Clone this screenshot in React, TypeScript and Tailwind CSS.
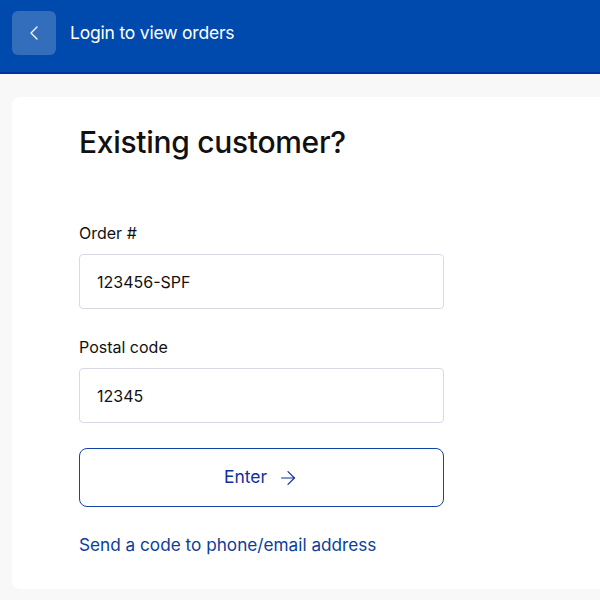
import React from 'react'
import { ChevronLeft, ArrowRight } from 'lucide-react'

const font = { fontFamily: 'Inter, "Noto Sans", sans-serif' }

export default function App() {
  return (
    <div className="min-h-[600px] w-[600px] overflow-hidden bg-[#f8f8f8]" style={font}>
      <header className="flex h-[74px] items-start gap-[14px] border-b-2 border-[#0033a1] bg-[#004aad] px-3 pt-[11px]">
        <button className="flex h-11 w-11 items-center justify-center rounded-md bg-white/20 text-white">
          <ChevronLeft size={24} strokeWidth={1.25} />
        </button>
        <h1 className="text-[17.5px] font-normal leading-[44px] tracking-[-0.2px] text-white">
          Login to view orders
        </h1>
      </header>

      <main className="pl-3 pt-[23px]">
        <div className="h-[492px] w-[620px] rounded-lg bg-white pl-[67px] pt-[27px]">
          <h2 className="text-[30px] font-medium leading-[36px] tracking-[-0.3px] text-[#111]">
            Existing customer?
          </h2>

          <div className="mt-[61px] flex w-[365px] flex-col">
            <label className="text-[16px] leading-6 text-[#111]">Order #</label>
            <input
              defaultValue="123456-SPF"
              className="mt-[9px] h-[55px] rounded border border-[#d9d9e3] px-[17px] text-[16px] text-[#111] outline-none"
            />

            <label className="mt-[26px] text-[16px] leading-6 text-[#111]">Postal code</label>
            <input
              defaultValue="12345"
              className="mt-[9px] h-[55px] rounded border border-[#d9d9e3] px-[17px] text-[16px] text-[#111] outline-none"
            />

            <button className="mt-[25px] flex h-[59px] items-center justify-center gap-[10px] rounded-lg border border-[#1443a8] text-[17.5px] text-[#10309a]">
              Enter
              <ArrowRight size={22} strokeWidth={1.3} />
            </button>

            <a href="#" className="mt-[25px] text-[17.2px] leading-[26px] text-[#0b3e9c]">
              Send a code to phone/email address
            </a>
          </div>
        </div>
      </main>
    </div>
  )
}
